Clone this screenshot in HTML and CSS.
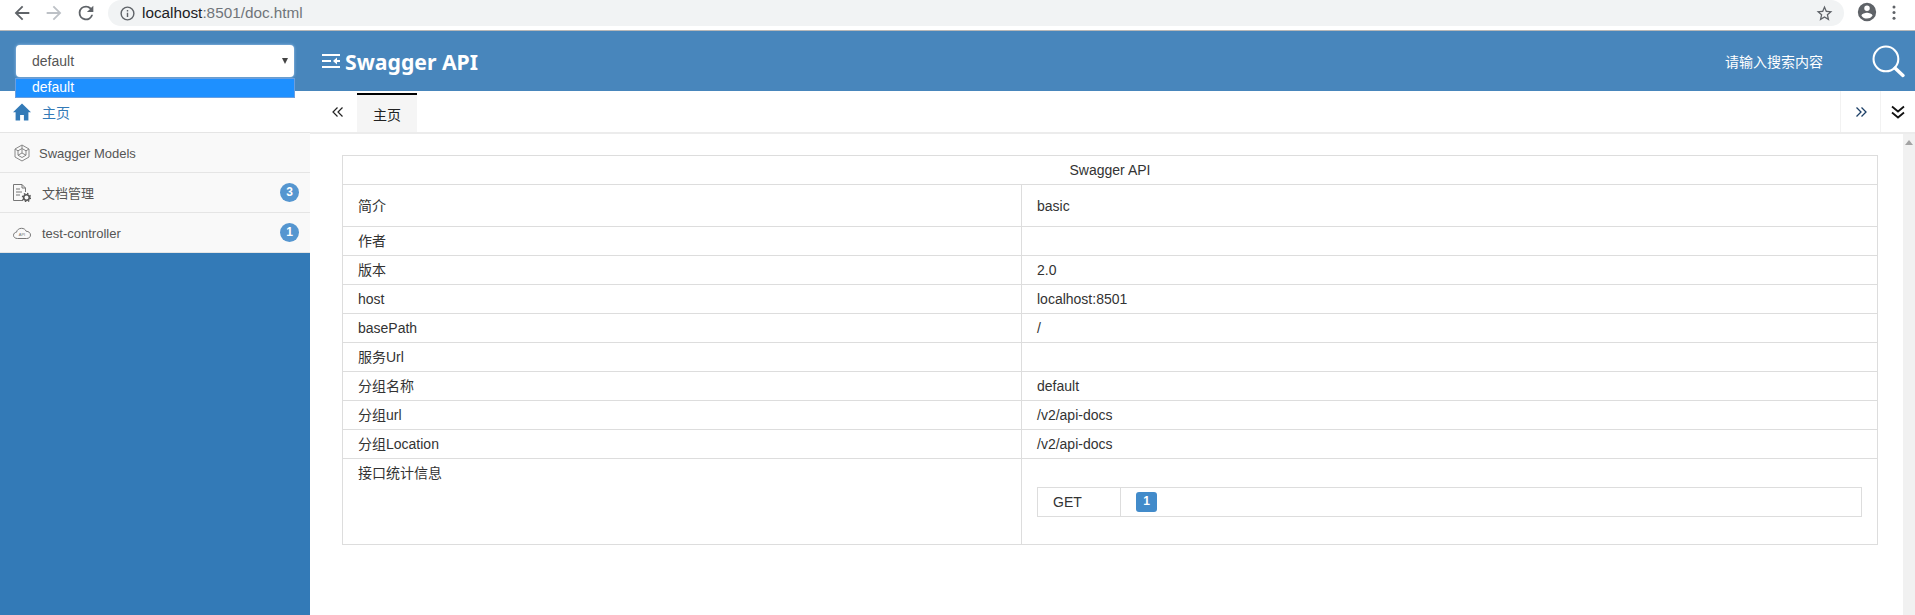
FILE: index.html
```html
<!DOCTYPE html>
<html lang="zh-CN">

<head>
  <meta charset="UTF-8">
  <title>Swagger API</title>
  <link rel="stylesheet" href="styles.css">
</head>

<body>
  <!-- Browser toolbar -->
  <div class="chrome">
    <svg class="chrome-btn first" viewBox="0 0 24 24"><path d="M20 11H7.83l5.59-5.59L12 4l-8 8 8 8 1.41-1.41L7.83 13H20z" fill="#5f6368"/></svg>
    <svg class="chrome-btn" viewBox="0 0 24 24"><path d="M4 11h12.17l-5.59-5.59L12 4l8 8-8 8-1.41-1.41L16.17 13H4z" fill="#bdc1c6"/></svg>
    <svg class="chrome-btn" viewBox="0 0 24 24"><path d="M17.65 6.35A7.96 7.96 0 0 0 12 4a8 8 0 1 0 7.73 10h-2.08A6 6 0 1 1 12 6c1.66 0 3.14.69 4.22 1.78L13 11h7V4z" fill="#5f6368"/></svg>
    <div class="urlbar">
      <svg class="url-info" viewBox="0 0 24 24"><path d="M11 7h2v2h-2zm0 4h2v6h-2zm1-9a10 10 0 1 0 0 20 10 10 0 0 0 0-20zm0 18a8 8 0 1 1 0-16 8 8 0 0 1 0 16z" fill="#5f6368"/></svg>
      <span class="url-host">localhost</span><span class="url-rest">:8501/doc.html</span>
      <svg class="url-star" viewBox="0 0 24 24"><path d="M22 9.24l-7.19-.62L12 2 9.19 8.63 2 9.24l5.46 4.73L5.82 21 12 17.27 18.18 21l-1.63-7.03L22 9.24zM12 15.4l-3.76 2.27 1-4.28-3.32-2.88 4.38-.38L12 6.1l1.71 4.04 4.38.38-3.32 2.88 1 4.28L12 15.4z" fill="#5f6368"/></svg>
    </div>
    <svg class="chrome-profile" viewBox="0 0 24 24"><path d="M12 2a10 10 0 1 0 0 20 10 10 0 0 0 0-20zm0 3a3 3 0 1 1 0 6 3 3 0 0 1 0-6zm0 14.2a7.2 7.2 0 0 1-6-3.22c.03-1.99 4-3.08 6-3.08s5.97 1.09 6 3.08a7.2 7.2 0 0 1-6 3.22z" fill="#5f6368"/></svg>
    <svg class="chrome-menu" viewBox="0 0 4 16"><circle cx="2" cy="2" r="1.6" fill="#5f6368"/><circle cx="2" cy="8" r="1.6" fill="#5f6368"/><circle cx="2" cy="14" r="1.6" fill="#5f6368"/></svg>
  </div>

  <!-- Шапка -->
  <div class="header">
    <div class="header-left">
      <div class="group-select">
        <span>default</span>
        <i class="select-arrow"></i>
        <div class="select-menu">default</div>
      </div>
    </div>
    <svg class="title-icon" viewBox="0 0 18 16"><path d="M0 2h18M0 8h9M0 14h18M18 8h-6" fill="none" stroke="#fff" stroke-width="2.2"/><path d="M11 8l4-3.400v6.800z" fill="#fff"/></svg>
    <div class="title">Swagger API</div>
    <div class="search-text">请输入搜索内容</div>
    <svg class="search-icon" viewBox="0 0 32 32"><circle cx="13.5" cy="13.5" r="12" fill="none" stroke="#fff" stroke-width="2"/><path d="M22.5 22.5L30 29.5" fill="none" stroke="#fff" stroke-width="3.4" stroke-linecap="round"/></svg>
  </div>

  <div class="layout">
    <!-- Боковая панель -->
    <div class="sidebar">
      <div class="nav-item home">
        <svg class="nav-icon" viewBox="0 0 18 18"><path d="M9 .5L0 9.200h2.600V17.500h4.500v-5.500h3.800v5.500h4.500V9.200H18z" fill="#337ab7"/></svg>
        <span>主页</span>
      </div>
      <div class="nav-item models">
        <svg class="nav-icon" viewBox="0 0 18 18"><g fill="none" stroke="#888" stroke-width="1"><path d="M9 1l7 4v8l-7 4-7-4V5z"/><path d="M9 4.500l4 2.300v4.400l-4 2.300-4-2.300V6.800zM9 1v3.500M2 5l3 1.800M16 5l-3 1.800M5 11.200L9 9l4 2.200M9 9V4.500"/></g></svg>
        <span>Swagger Models</span>
      </div>
      <div class="nav-item">
        <svg class="nav-icon" viewBox="0 0 18 18"><g fill="none" stroke="#777" stroke-width="1"><path d="M10 16.500H.5V.5H9l3.500 3.500v4M9 .5V4h3.500M3 5h4M3 8h6M3 11h4"/></g><circle cx="13.500" cy="13.500" r="2.800" fill="none" stroke="#555" stroke-width="1.600"/><circle cx="13.500" cy="13.500" r="4" fill="none" stroke="#555" stroke-width="1.400" stroke-dasharray="1.500 1.640"/></svg>
        <span>文档管理</span>
        <span class="nav-badge">3</span>
      </div>
      <div class="nav-item nav-api">
        <svg class="nav-icon" viewBox="0 0 18 18"><path d="M4.500 14.500C2 14.500.5 13 .5 11.300c0-1.700 1.300-3 3-3.100C4 5.800 6 4.300 8.500 4.300c2.300 0 4 1.200 4.700 3 2.500 0 4.300 1.600 4.300 3.700 0 2-1.600 3.500-3.800 3.500z" fill="none" stroke="#777"/><text x="9" y="12" class="cloud-text">API</text></svg>
        <span class="nav-label">test-controller</span>
        <span class="nav-badge">1</span>
      </div>
    </div>

    <!-- Основной контент -->
    <div class="main">
      <div class="tabs">
        <div class="tab-prev">
          <svg class="tab-arrow" viewBox="0 0 12 12"><path d="M5.500 1.500L1 6l4.500 4.500M10.500 1.500L6 6l4.500 4.500" fill="none" stroke="#222" stroke-width="1.200"/></svg>
        </div>
        <div class="tab-active">主页</div>
        <div class="tab-next">
          <svg class="tab-arrow" viewBox="0 0 12 12"><path d="M1.500 1.500L6 6l-4.500 4.500M6.500 1.500L11 6l-4.500 4.500" fill="none" stroke="#1c3f66" stroke-width="1.300"/></svg>
        </div>
        <div class="tab-more">
          <svg class="tab-more-icon" viewBox="0 0 14 14"><path d="M1 1.500l6 5 6-5M1 7.500l6 5 6-5" fill="none" stroke="#111" stroke-width="1.800"/></svg>
        </div>
      </div>

      <div class="content-row">
        <div class="content">
          <table class="info-table">
            <colgroup>
              <col class="col-first">
              <col>
            </colgroup>
            <thead>
              <tr><th colspan="2">Swagger API</th></tr>
            </thead>
            <tbody>
              <tr class="row-tall"><td class="col-name">简介</td><td>basic</td></tr>
              <tr><td class="col-name">作者</td><td></td></tr>
              <tr><td class="col-name">版本</td><td>2.0</td></tr>
              <tr><td class="col-name">host</td><td>localhost:8501</td></tr>
              <tr><td class="col-name">basePath</td><td>/</td></tr>
              <tr><td class="col-name">服务Url</td><td></td></tr>
              <tr><td class="col-name">分组名称</td><td>default</td></tr>
              <tr><td class="col-name">分组url</td><td>/v2/api-docs</td></tr>
              <tr><td class="col-name">分组Location</td><td>/v2/api-docs</td></tr>
              <tr>
                <td class="col-name">接口统计信息</td>
                <td class="stats-cell">
                  <table class="stats-table">
                    <tr>
                      <td class="stats-method">GET</td>
                      <td class="stats-count"><span class="count-badge">1</span></td>
                    </tr>
                  </table>
                </td>
              </tr>
            </tbody>
          </table>
        </div>
        <div class="scrollbar"><i class="scroll-up"></i></div>
      </div>
    </div>
  </div>
</body>

</html>
```

FILE: styles.css
```css
* {
  box-sizing: border-box;
}

html,
body {
  height: 100%;
}

body {
  margin: 0;
  overflow: hidden;
  display: flex;
  flex-direction: column;
  font-family: "Liberation Sans", "Noto Sans CJK SC", sans-serif;
  font-size: 14px;
  color: #333;
  background-color: #fff;
}

/* Browser toolbar */
.chrome {
  height: 31px;
  flex: none;
  display: flex;
  align-items: flex-start;
  background-color: #fff;
  border-bottom: 1px solid #b8b8b8;
}

.chrome-btn {
  width: 22px;
  height: 22px;
  margin: 2px 0 0 10px;
  flex: none;
}

.chrome-btn.first {
  margin-left: 11px;
}

.urlbar {
  width: 1736px;
  height: 26px;
  margin-left: 11px;
  padding-left: 11px;
  display: flex;
  align-items: center;
  flex: none;
  background-color: #f1f3f4;
  border-radius: 13px;
  font-size: 15.3px;
}

.url-info {
  width: 17px;
  height: 17px;
  margin-right: 6px;
}

.url-host {
  color: #202124;
}

.url-rest {
  color: #70757a;
}

.url-star {
  width: 19px;
  height: 19px;
  margin-left: auto;
  margin-right: 10px;
}

.chrome-profile {
  width: 22px;
  height: 22px;
  margin: 1px 0 0 12px;
  flex: none;
}

.chrome-menu {
  width: 4px;
  height: 15px;
  margin: 5px 0 0 14px;
  flex: none;
}

/* Шапка */
.header {
  height: 60px;
  flex: none;
  display: flex;
  align-items: center;
  background-color: #4886bc;
  color: #fff;
}

.header-left {
  width: 310px;
  flex: none;
  padding-left: 16px;
}

.group-select {
  position: relative;
  width: 278px;
  height: 32px;
  padding-left: 16px;
  display: flex;
  align-items: center;
  background-color: #fff;
  border-radius: 4px;
  box-shadow: 0 0 3px #a8cdf0;
  color: #555;
}

.select-arrow {
  position: absolute;
  right: 6px;
  top: 13px;
  border-left: 3px solid transparent;
  border-right: 3px solid transparent;
  border-top: 6px solid #444;
}

.select-menu {
  position: absolute;
  left: -1px;
  top: 33px;
  width: 280px;
  height: 20px;
  padding-left: 16px;
  line-height: 16px;
  background-color: #1e90ff;
  border: 1px solid #6a9fe0;
  color: #fff;
  z-index: 2;
}

.title-icon {
  width: 18px;
  height: 16px;
  margin-left: 12px;
  flex: none;
}

.title {
  margin-left: 5px;
  font-family: "Noto Sans", "Liberation Sans", sans-serif;
  font-size: 21.2px;
  font-weight: 700;
  white-space: nowrap;
}

.search-text {
  margin-left: auto;
  font-size: 14px;
}

.search-icon {
  width: 33px;
  height: 33px;
  margin: 0 10px 0 49px;
  flex: none;
}

.layout {
  flex: 1;
  min-height: 0;
  display: flex;
}

/* Боковая панель */
.sidebar {
  width: 310px;
  flex: none;
  background-color: #337ab7;
}

.nav-item {
  height: 40px;
  display: flex;
  align-items: center;
  padding: 0 11px 0 13px;
  background-color: #f9f9f9;
  border-bottom: 1px solid #e5e5e5;
  font-size: 13px;
  color: #555;
}

.nav-item.home {
  height: 42px;
  background-color: #fff;
  font-size: 14px;
  color: #337ab7;
}

.nav-item.models span {
  margin-left: -3px;
  padding-top: 1px;
}

.nav-label {
  padding-top: 1px;
}

.nav-icon {
  width: 18px;
  height: 18px;
  margin-right: 11px;
  flex: none;
}

.cloud-text {
  font-size: 4px;
  text-anchor: middle;
  fill: #777;
}

.nav-badge {
  width: 19px;
  height: 19px;
  margin-left: auto;
  border-radius: 50%;
  background-color: #5596d0;
  color: #fff;
  font-size: 12px;
  font-weight: 700;
  line-height: 18px;
  text-align: center;
}

/* Вкладки */
.main {
  flex: 1;
  min-width: 0;
  display: flex;
  flex-direction: column;
}

.tabs {
  height: 43px;
  flex: none;
  display: flex;
  border-bottom: 2px solid #ececec;
}

.tab-prev {
  width: 47px;
  padding-left: 9px;
  display: flex;
  align-items: center;
  justify-content: center;
}

.tab-arrow {
  width: 12px;
  height: 12px;
}

.tab-active {
  width: 60px;
  margin-top: 2px;
  display: flex;
  align-items: center;
  justify-content: center;
  background-color: #f5f5f5;
  border-top: 2px solid #000;
  color: #222;
}

.tab-next {
  width: 40px;
  margin-left: auto;
  display: flex;
  align-items: center;
  justify-content: center;
  border-left: 1px solid #f2f2f2;
}

.tab-more {
  width: 35px;
  display: flex;
  align-items: center;
  justify-content: center;
  border-left: 1px solid #f2f2f2;
}

.tab-more-icon {
  width: 14px;
  height: 14px;
}

/* Таблица */
.content-row {
  flex: 1;
  min-height: 0;
  display: flex;
}

.content {
  flex: 1;
  padding: 21px 25px 0 32px;
}

.info-table {
  width: 100%;
  border-collapse: collapse;
  table-layout: fixed;
}

.col-first {
  width: 679px;
}

.info-table th,
.info-table td {
  height: 29px;
  padding: 0 15px;
  border: 1px solid #ddd;
  font-weight: 400;
  line-height: 20px;
  text-align: left;
}

.info-table th {
  text-align: center;
}

.info-table td.col-name {
  vertical-align: top;
  padding-top: 4px;
}

.info-table .row-tall td {
  height: 42px;
  padding-top: 0;
  vertical-align: middle;
}

.info-table td.stats-cell {
  height: 86px;
}

.stats-table {
  width: 100%;
  border-collapse: collapse;
}

.info-table td.stats-method {
  width: 83px;
}

.count-badge {
  display: block;
  width: 21px;
  height: 20px;
  border-radius: 3px;
  background-color: #428bca;
  color: #fff;
  font-size: 12px;
  font-weight: 700;
  line-height: 18px;
  text-align: center;
}

.scrollbar {
  position: relative;
  width: 12px;
  flex: none;
  background-color: #f1f1f1;
}

.scroll-up {
  position: absolute;
  left: 2px;
  top: 6px;
  border-left: 4px solid transparent;
  border-right: 4px solid transparent;
  border-bottom: 5px solid #a3a3a3;
}
```
